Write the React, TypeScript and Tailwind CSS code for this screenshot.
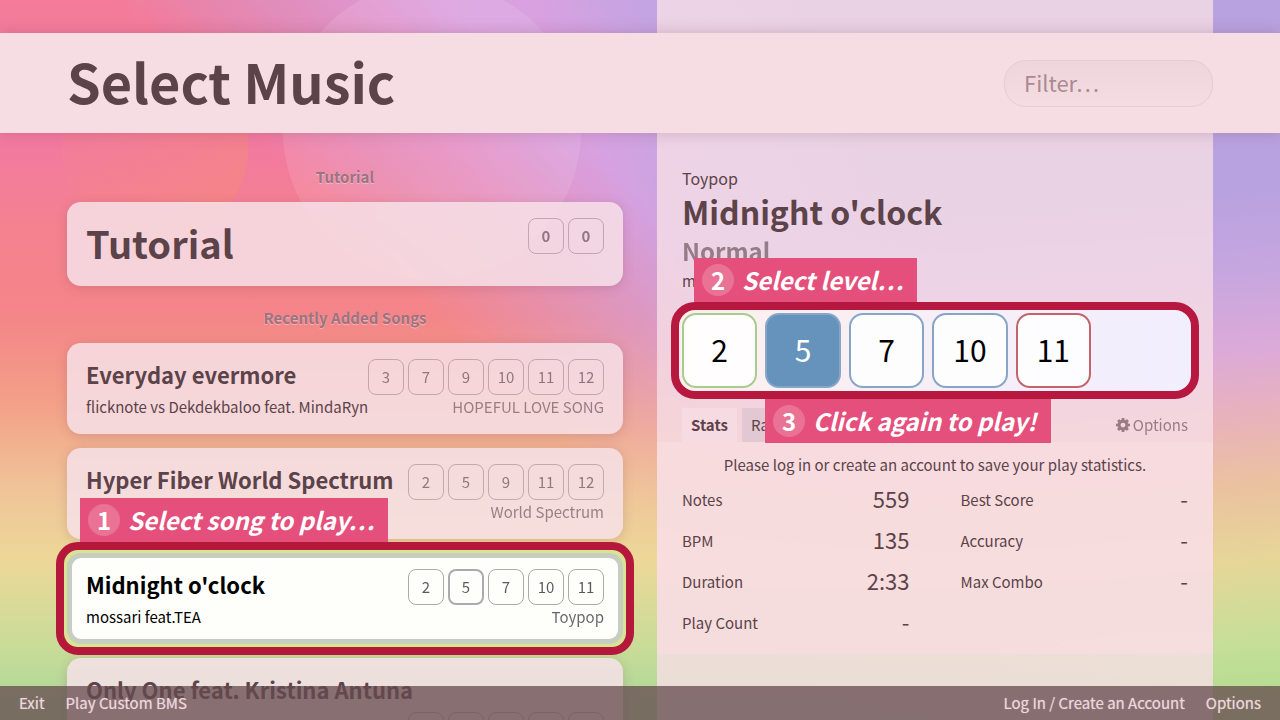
import type { ReactNode } from "react";

type Song = {
  title: string;
  artist: string;
  genre: string;
  levels: number[];
  selectedLevel?: number;
};

const songs: Song[] = [
  {
    title: "Everyday evermore",
    artist: "flicknote vs Dekdekbaloo feat. MindaRyn",
    genre: "HOPEFUL LOVE SONG",
    levels: [3, 7, 9, 10, 11, 12],
  },
  {
    title: "Hyper Fiber World Spectrum",
    artist: "",
    genre: "World Spectrum",
    levels: [2, 5, 9, 11, 12],
  },
  {
    title: "Midnight o'clock",
    artist: "mossari feat.TEA",
    genre: "Toypop",
    levels: [2, 5, 7, 10, 11],
    selectedLevel: 5,
  },
  {
    title: "Only One feat. Kristina Antuna",
    artist: "",
    genre: "",
    levels: [2, 5, 7, 10, 11],
  },
];

const charts = [
  { level: 2, style: "border-[#a9cb8b] bg-white/85 text-black" },
  { level: 5, style: "border-[#86a6c8] bg-[#6593bc] text-white" },
  { level: 7, style: "border-[#86a6c8] bg-white/85 text-black" },
  { level: 10, style: "border-[#86a6c8] bg-white/85 text-black" },
  { level: 11, style: "border-[#c4646a] bg-white/85 text-black" },
];

const playInfo = [
  ["Notes", "559"],
  ["BPM", "135"],
  ["Duration", "2:33"],
  ["Play Count", "-"],
];

const records = [
  ["Best Score", "-"],
  ["Accuracy", "-"],
  ["Max Combo", "-"],
];

function Backdrop() {
  return (
    <div aria-hidden="true" className="absolute inset-0 overflow-hidden">
      <div className="absolute inset-0 bg-[linear-gradient(176deg,#b8a2e0_0%,#b8a2e0_34%,#c6a6df_44%,#dcaad8_54%,#e8b2bc_62%,#ebc29f_71%,#e6d698_80%,#c6df98_90%,#b4dc90_97%)]" />
      <div className="absolute inset-0 bg-[linear-gradient(70deg,transparent_25%,#dc9fde_42%,#d8a1e0_52%,#c6a4e2_58%,transparent_72%)] mask-[linear-gradient(to_bottom,black_30%,transparent_62%)]" />
      <div className="absolute inset-0 bg-[linear-gradient(180deg,#f47c9a_0%,#f27aa0_20%,#f4828f_32%,#f48588_44%,#f3a088_56%,#f0c498_68%,#ecd898_78%,#c8dc98_90%,#b0d898_97%)] mask-[linear-gradient(45deg,black_42%,transparent_58%)]" />
      <div className="absolute top-[-18px] left-[283px] size-[298px] rounded-full bg-white/10" />
      <div className="absolute top-[56px] left-[62px] size-[186px] rounded-full bg-linear-to-r from-[#f5906f]/10 to-[#f5906f]/35" />
    </div>
  );
}

function GearIcon() {
  return (
    <svg aria-hidden="true" viewBox="0 0 1536 1536" className="size-[14px] fill-current">
      <path d="M1024 768q0-106-75-181t-181-75-181 75-75 181 75 181 181 75 181-75 75-181zm512-109v222q0 12-8 23t-20 13l-185 28q-19 54-39 91 35 50 107 138 10 12 10 25t-9 23q-27 37-99 108t-94 71q-12 0-26-9l-138-108q-44 23-91 38-16 136-29 186-7 28-36 28h-222q-14 0-24.500-8.500t-11.500-21.500l-28-184q-49-16-90-37l-141 107q-10 9-25 9-14 0-25-11-126-114-165-168-7-10-7-23 0-12 8-23 15-21 51-66.500t54-70.500q-27-50-41-99l-183-27q-13-2-21-12.500t-8-23.500v-222q0-12 8-23t19-13l186-28q14-46 39-92-40-57-107-138-10-12-10-24 0-10 9-23 26-36 98.500-107.500t94.500-71.500q13 0 26 10l138 107q44-23 91-38 16-136 29-186 7-28 36-28h222q14 0 24.500 8.500t11.500 21.500l28 184q49 16 90 37l142-107q9-9 24-9 13 0 25 10 129 119 165 170 7 8 7 22 0 12-8 23-15 21-51 66.500t-54 70.500q26 50 41 98l183 28q13 2 21 12.500t8 23.500z" />
    </svg>
  );
}

function Callout({ step, place, children }: { step: number; place: string; children: ReactNode }) {
  return (
    <div
      className={`absolute z-20 flex h-11 items-center gap-2 bg-[#e44f7b] pr-[14px] pl-2 text-2xl font-bold whitespace-nowrap text-white ${place}`}
    >
      <span className="flex size-8 items-center justify-center rounded-full bg-white/20 pb-px">{step}</span>
      <span className="pb-px italic">{children}</span>
    </div>
  );
}

function SectionHeading({ children }: { children: ReactNode }) {
  return (
    <h2 className="pt-[7px] text-center text-[15px] leading-[22px] font-bold text-[#9a7480] [text-shadow:0_1px_1px_rgba(255,255,255,0.4)]">
      {children}
    </h2>
  );
}

function LevelChip({ level, active, bold }: { level: number; active?: boolean; bold?: boolean }) {
  return (
    <span
      className={`flex size-9 items-center justify-center rounded-lg text-[15px] opacity-65 ${
        active ? "border-2" : "border"
      } ${bold ? "font-bold" : ""} border-current/50`}
    >
      {level}
    </span>
  );
}

function SongCard({ song }: { song: Song }) {
  const selected = song.selectedLevel !== undefined;
  return (
    <li className="relative">
      {selected && (
        <>
          <div className="pointer-events-none absolute -inset-[11px] rounded-[22px] border-8 border-[#b6183c] bg-[#d9e493]" />
          <Callout step={1} place="left-[13px] bottom-[102px]">
            Select song to play…
          </Callout>
        </>
      )}
      <button
        type="button"
        className={`relative block w-full rounded-[14px] text-left ${
          selected
            ? "border-[5px] border-[#c6cec2] bg-[#fefffb] px-[14px] py-[11px] text-black"
            : "bg-[#f6e1e7]/85 px-[19px] py-4 shadow-[0_2px_12px_rgba(110,60,80,0.2)]"
        }`}
      >
        <span className="flex flex-wrap items-start justify-between gap-x-1 gap-y-2">
          <span className="text-[22px] leading-[30px] font-bold whitespace-nowrap">{song.title}</span>
          <span className="ml-auto flex gap-1">
            {song.levels.map((level) => (
              <LevelChip key={level} level={level} active={level === song.selectedLevel} />
            ))}
          </span>
        </span>
        <span className="flex min-h-[23px] justify-between text-[15px] leading-[23px]">
          <span>{song.artist}</span>
          <span className="opacity-60">{song.genre}</span>
        </span>
      </button>
    </li>
  );
}

function StatTable({ rows, label }: { rows: string[][]; label: string }) {
  return (
    <table aria-label={label} className="w-full self-start">
      <tbody>
        {rows.map(([name, value]) => (
          <tr key={name} className="h-[41px]">
            <th scope="row" className="p-0 text-left text-[15px] leading-6 font-normal">
              {name}
            </th>
            <td className="p-0 pb-1 text-right text-[22px] leading-8">{value}</td>
          </tr>
        ))}
      </tbody>
    </table>
  );
}

export default function App() {
  return (
    <div className="relative grid h-screen grid-cols-[67px_minmax(0,1fr)_34px_minmax(0,1fr)_67px] grid-rows-[auto_minmax(0,1fr)_auto] overflow-hidden bg-[#e8b0c0] font-['Noto_Sans_CJK_JP','Noto_Sans',sans-serif] text-[#5c434a]">
      <Backdrop />

      <header className="z-10 col-span-full row-start-1 mt-[33px] flex h-[100px] items-center justify-between bg-[#f6dde3] px-[67px] shadow-[0_0_14px_rgba(110,60,80,0.25)]">
        <h1 className="pb-[5px] text-[54px] leading-[64px] font-bold">Select Music</h1>
        <input
          type="text"
          aria-label="Filter songs"
          placeholder="Filter…"
          className="h-[47px] w-[209px] rounded-[22px] border border-[#e3ccd3] bg-linear-to-b from-[#eed5db] to-[#f5dce2] px-[19px] pb-[2px] text-[22px] placeholder:text-[#a98a91]"
        />
      </header>

      <main className="relative col-start-2 row-span-2 row-start-2">
        <div className="flex flex-col gap-3.5 pt-[26px]">
          <SectionHeading>Tutorial</SectionHeading>
          <button
            type="button"
            className="flex items-start justify-between rounded-[14px] bg-[#f6e1e7]/85 px-[19px] pt-4 pb-[18px] text-left shadow-[0_2px_12px_rgba(110,60,80,0.2)]"
          >
            <span className="text-[38px] leading-[50px] font-bold">Tutorial</span>
            <span className="flex gap-1">
              <LevelChip level={0} bold />
              <LevelChip level={0} bold />
            </span>
          </button>
          <SectionHeading>Recently Added Songs</SectionHeading>
          <ul className="flex flex-col gap-3.5">
            {songs.map((song) => (
              <SongCard key={song.title} song={song} />
            ))}
          </ul>
        </div>
      </main>

      <section
        aria-label="Song details"
        className="relative col-start-4 row-span-3 row-start-1 bg-[#f6dee6]/80 pt-[166px]"
      >
        <div className="px-[25px]">
          <p className="text-base leading-6">Toypop</p>
          <h2 className="text-[32px] leading-[42px] font-bold">Midnight o'clock</h2>
          <h3 className="text-2xl leading-[38px] font-bold opacity-60">Normal</h3>
          <p className="text-[15px] leading-[22px]">mossari feat.TEA</p>
          <div className="relative mt-[21px]">
            <div className="absolute -inset-[11px] rounded-[24px] border-8 border-[#b6183f] bg-linear-to-r from-[#fdf0ee] to-[#f1eefe]" />
            <Callout step={2} place="left-3 bottom-[86px]">
              Select level…
            </Callout>
            <Callout step={3} place="left-[83px] top-[86px]">
              Click again to play!
            </Callout>
            <div className="relative grid w-[409px] grid-cols-5 gap-2">
              {charts.map(({ level, style }) => (
                <button
                  key={level}
                  type="button"
                  className={`h-[75px] rounded-[14px] border-2 pb-0.5 text-[30px] ${style}`}
                >
                  {level}
                </button>
              ))}
            </div>
          </div>
        </div>

        <div className="mt-5 flex items-start justify-between px-[25px] text-[15px]">
          <div role="tablist" className="flex gap-[5px]">
            <button type="button" role="tab" aria-selected="true" className="h-[34px] bg-[#f7dbe2] px-[9px] font-bold">
              Stats
            </button>
            <button type="button" role="tab" aria-selected="false" className="h-[34px] bg-[#e2c8d2] px-[9px]">
              Ranking
            </button>
          </div>
          <button type="button" className="flex h-[34px] items-center gap-[3px] opacity-60">
            <GearIcon />
            Options
          </button>
        </div>

        <div className="bg-[#f8dde0]/70 px-[25px] pt-[11px] pb-[11px]">
          <p className="text-center text-[15px] leading-6">
            Please log in or create an account to save your play statistics.
          </p>
          <div className="mt-[2px] grid grid-cols-2 gap-[51px]">
            <StatTable rows={playInfo} label="Song information" />
            <StatTable rows={records} label="Personal records" />
          </div>
        </div>
      </section>

      <footer className="z-20 col-span-full row-start-3 flex h-[34px] items-center justify-between bg-[#66494f]/75 px-[19px] text-[15px] text-[#eed6dc] [text-shadow:0_0_1px_rgba(238,214,220,0.6)]">
        <nav className="flex gap-[21px]">
          <a href="#exit">Exit</a>
          <a href="#custom">Play Custom BMS</a>
        </nav>
        <nav className="flex gap-[21px]">
          <a href="#login">Log In / Create an Account</a>
          <a href="#options">Options</a>
        </nav>
      </footer>
    </div>
  );
}
